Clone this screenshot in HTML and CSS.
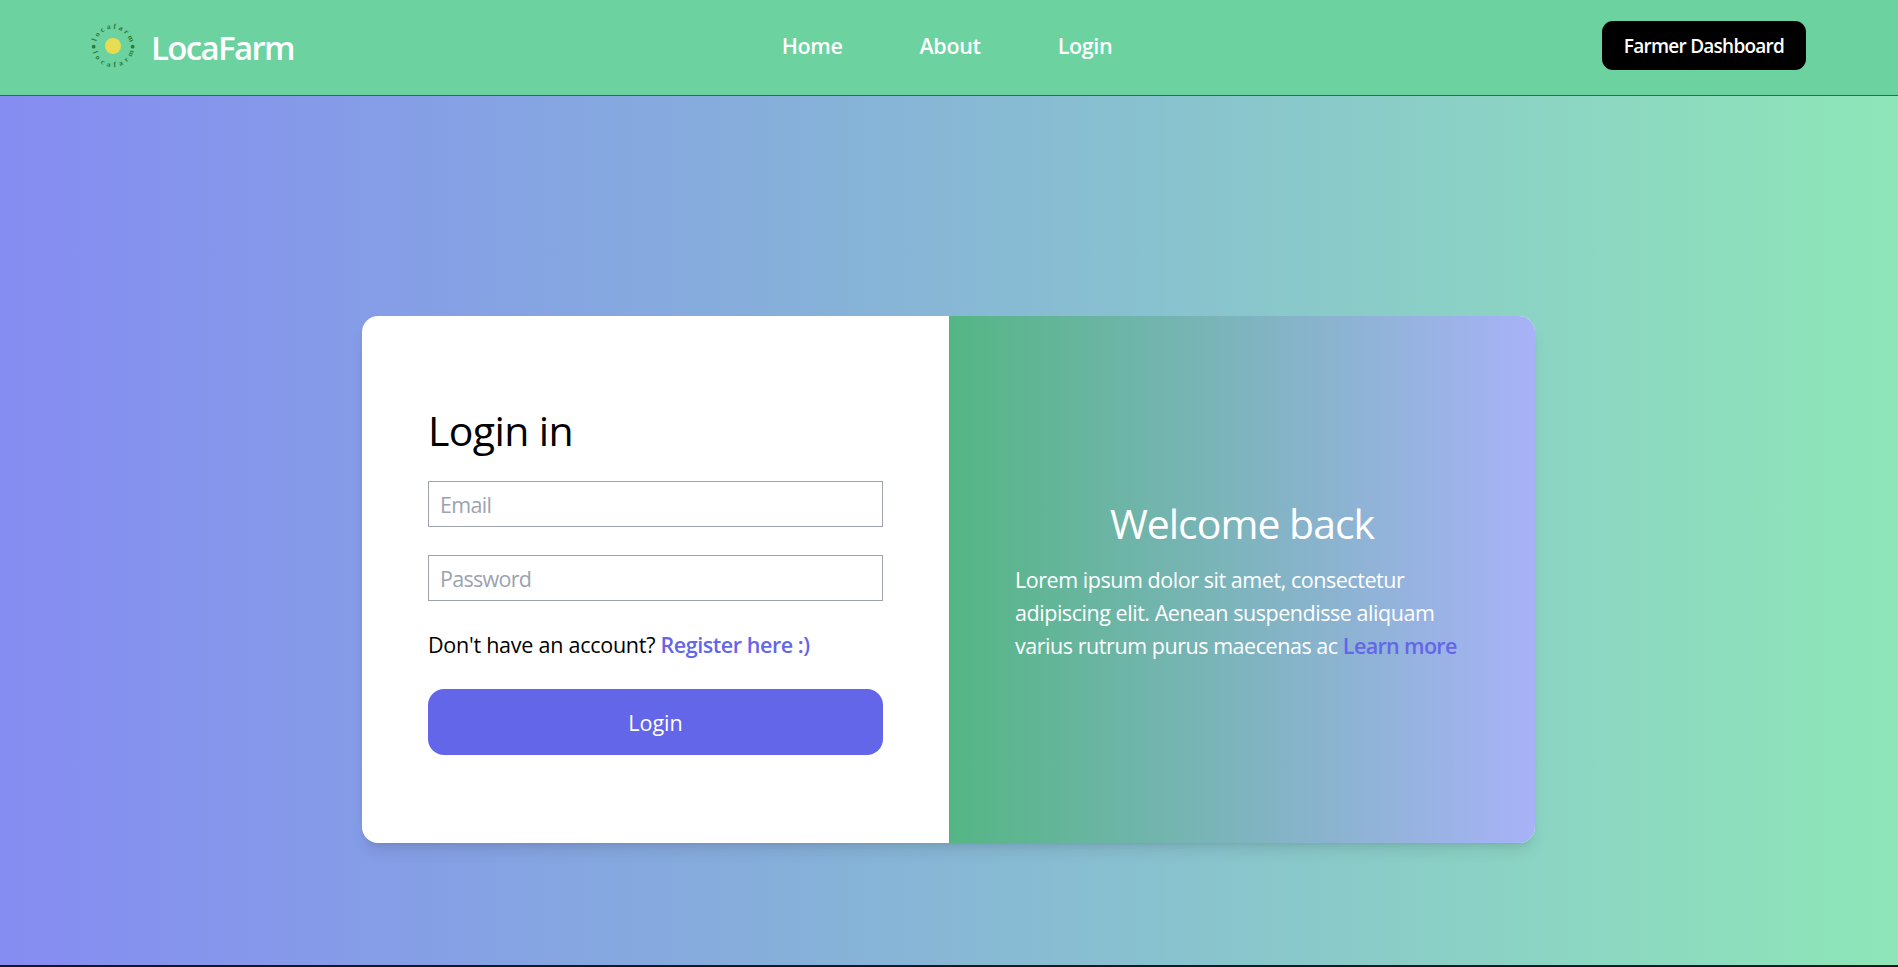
FILE: index.html
```html
<!DOCTYPE html>
<html lang="en">
<head>
    <meta charset="UTF-8">
    <meta name="viewport" content="width=device-width, initial-scale=1.0">
    <title>LocaFarm</title>
    <link rel="stylesheet" href="styles.css">
</head>
<body>
    <header class="navbar">
        <a class="brand" href="#">
            <svg class="logo" viewBox="0 0 44 44" width="44" height="44">
                <defs>
                    <path id="ringTop" d="M4.7 22a17.3 17.3 0 0 1 34.6 0" />
                    <path id="ringBottom" d="M0.8 22a21.2 21.2 0 0 0 42.4 0" />
                </defs>
                <circle cx="22" cy="22" r="8" fill="#e8dc52" />
                <circle cx="2.7" cy="22.7" r="1.9" fill="#2f7a35" />
                <circle cx="41.6" cy="22.7" r="1.9" fill="#2f7a35" />
                <text class="logo-text"><textPath href="#ringTop" startOffset="4.5" textLength="46">locafarm</textPath></text>
                <text class="logo-text"><textPath href="#ringBottom" startOffset="6" textLength="55">locafarm</textPath></text>
            </svg>
            <span class="brand-name">LocaFarm</span>
        </a>
        <nav class="nav-links">
            <a href="#">Home</a>
            <a href="#">About</a>
            <a href="#">Login</a>
        </nav>
        <a class="dashboard-btn" href="#">Farmer Dashboard</a>
    </header>
    <main class="page">
        <div class="card">
            <form class="login">
                <h1>Login in</h1>
                <input type="email" placeholder="Email">
                <input type="password" placeholder="Password">
                <p class="register">Don't have an account? <a href="#">Register here :)</a></p>
                <button type="button">Login</button>
            </form>
            <section class="welcome">
                <h2>Welcome back</h2>
                <p>Lorem ipsum dolor sit amet, consectetur adipiscing elit. Aenean suspendisse aliquam varius rutrum purus maecenas ac <a href="#">Learn more</a></p>
            </section>
        </div>
    </main>
    <footer class="footer"></footer>
</body>
</html>
```
FILE: styles.css
```css
* {
    box-sizing: border-box;
    margin: 0;
    padding: 0;
}

body {
    font-family: 'Segoe UI', 'Open Sans', 'Noto Sans', sans-serif;
    font-size: 21.5px;
    line-height: 33px;
    height: 967px;
    overflow: hidden;
    display: flex;
    flex-direction: column;
}

a {
    color: inherit;
    text-decoration: none;
}

.navbar {
    display: grid;
    grid-template-columns: 1fr auto 1fr;
    align-items: center;
    height: 96px;
    padding: 0 92px 4px 91px;
    background-color: #6bd2a0;
    border-bottom: 1px solid #4b5563;
    color: #fff;
    font-weight: 600;
}

.brand {
    display: flex;
    align-items: center;
    gap: 16px;
}

.logo {
    overflow: visible;
}

.logo-text {
    font-family: 'Liberation Serif', serif;
    font-size: 7.5px;
    font-weight: bold;
    fill: #2f7a35;
}

.brand-name {
    font-size: 33px;
    padding-top: 4px;
    letter-spacing: -1.65px;
}

.nav-links {
    display: flex;
    gap: 77px;
    letter-spacing: -0.35px;
    padding-right: 3px;
}

.dashboard-btn {
    justify-self: end;
    width: 204px;
    height: 49px;
    border-radius: 11px;
    background-color: #000;
    font-size: 19px;
    line-height: 51px;
    text-align: center;
    letter-spacing: -0.75px;
}

.page {
    flex: 1;
    display: flex;
    justify-content: center;
    align-items: center;
    padding: 98px 1px 0 0;
    background-image: linear-gradient(to right, #858cf2, #86b0da 42%, #8ee6b8);
}

.card {
    display: flex;
    width: 1173px;
    height: 527px;
    border-radius: 16px;
    background-color: #fff;
    overflow: hidden;
    box-shadow: 0 10px 15px -3px rgba(0, 0, 0, 0.1), 0 4px 6px -4px rgba(0, 0, 0, 0.1);
}

.login,
.welcome {
    flex: 0 0 587px;
    padding: 0 66px;
    display: flex;
    flex-direction: column;
    justify-content: center;
}

.welcome {
    flex: 1;
    padding-right: 60px;
    padding-bottom: 2px;
    color: #fff;
    letter-spacing: -0.45px;
    background-image: linear-gradient(to right, #54b684, #a8b2f8);
}

h1,
h2 {
    font-size: 41px;
    font-weight: 400;
    line-height: 56px;
}

h1 {
    margin-top: -2px;
    margin-bottom: 23px;
    letter-spacing: -0.6px;
}

input {
    height: 46px;
    padding: 4px 11px;
    border: 1px solid #9ca3af;
    font: inherit;
    letter-spacing: -0.7px;
    margin-bottom: 28px;
}

input::placeholder {
    color: #9ca3af;
}

.register {
    margin-top: -1px;
    margin-bottom: 28px;
    letter-spacing: -0.25px;
}

.register a,
.welcome a {
    color: #6366e9;
    font-weight: 600;
    letter-spacing: -0.45px;
}

.welcome a {
    letter-spacing: -0.65px;
}

button {
    height: 66px;
    border: none;
    border-radius: 16px;
    background-color: #6366e9;
    color: #fff;
    font: inherit;
}

.welcome h2 {
    padding-right: 6px;
    text-align: center;
    margin-bottom: 12px;
    letter-spacing: -1px;
}

.footer {
    height: 2px;
    background-color: #111827;
}
```
